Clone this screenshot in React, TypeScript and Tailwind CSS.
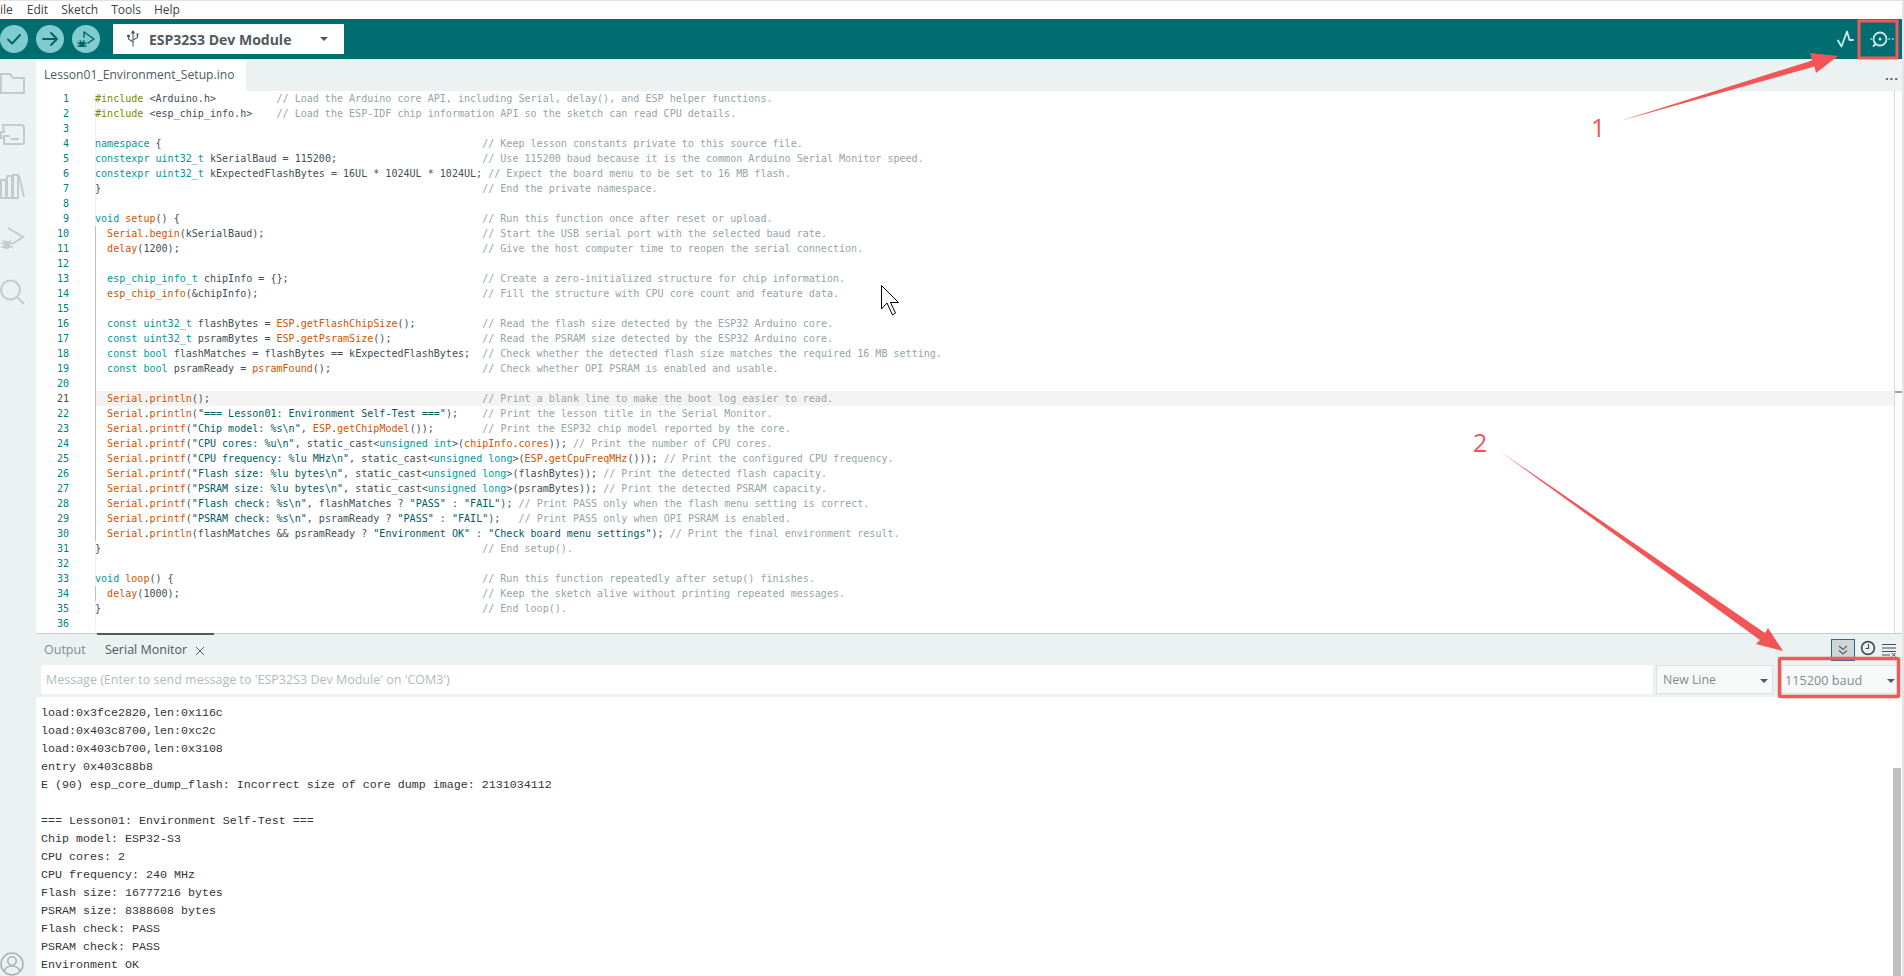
import React from "react";

const tok: Record<string, string> = {
  k: "text-[#00979d]",
  f: "text-[#d35400]",
  p: "text-[#728e00]",
  s: "text-[#005c5f]",
  c: "text-[#95a5a6]",
};

type L = [string, string?, number?];
const code: L[] = [
  ["[p:#include] <Arduino.h>", "// Load the Arduino core API, including Serial, delay(), and ESP helper functions.", 30],
  ["[p:#include] <esp_chip_info.h>", "// Load the ESP-IDF chip information API so the sketch can read CPU details.", 30],
  [""],
  ["[k:namespace] {", "// Keep lesson constants private to this source file."],
  ["[k:constexpr] [k:uint32_t] kSerialBaud = 115200;", "// Use 115200 baud because it is the common Arduino Serial Monitor speed."],
  ["[k:constexpr] [k:uint32_t] kExpectedFlashBytes = 16UL * 1024UL * 1024UL;", "// Expect the board menu to be set to 16 MB flash."],
  ["}", "// End the private namespace."],
  [""],
  ["[k:void] [f:setup]() {", "// Run this function once after reset or upload."],
  ["  [f:Serial].[f:begin](kSerialBaud);", "// Start the USB serial port with the selected baud rate."],
  ["  [f:delay](1200);", "// Give the host computer time to reopen the serial connection."],
  [""],
  ["  [k:esp_chip_info_t] chipInfo = {};", "// Create a zero-initialized structure for chip information."],
  ["  [f:esp_chip_info](&chipInfo);", "// Fill the structure with CPU core count and feature data."],
  [""],
  ["  [k:const] [k:uint32_t] flashBytes = [f:ESP].[f:getFlashChipSize]();", "// Read the flash size detected by the ESP32 Arduino core."],
  ["  [k:const] [k:uint32_t] psramBytes = [f:ESP].[f:getPsramSize]();", "// Read the PSRAM size detected by the ESP32 Arduino core."],
  ["  [k:const] [k:bool] flashMatches = flashBytes == kExpectedFlashBytes;", "// Check whether the detected flash size matches the required 16 MB setting."],
  ["  [k:const] [k:bool] psramReady = [f:psramFound]();", "// Check whether OPI PSRAM is enabled and usable."],
  [""],
  ["  [f:Serial].[f:println]();", "// Print a blank line to make the boot log easier to read."],
  ['  [f:Serial].[f:println]([s:"=== Lesson01: Environment Self-Test ==="]);', "// Print the lesson title in the Serial Monitor."],
  ['  [f:Serial].[f:printf]([s:"Chip model: %s\\n"], [f:ESP].[f:getChipModel]());', "// Print the ESP32 chip model reported by the core."],
  ['  [f:Serial].[f:printf]([s:"CPU cores: %u\\n"], static_cast<[k:unsigned] [k:int]>([f:chipInfo].[f:cores]));', "// Print the number of CPU cores.", 0],
  ['  [f:Serial].[f:printf]([s:"CPU frequency: %lu MHz\\n"], static_cast<[k:unsigned] [k:long]>([f:ESP].[f:getCpuFreqMHz]()));', "// Print the configured CPU frequency.", 0],
  ['  [f:Serial].[f:printf]([s:"Flash size: %lu bytes\\n"], static_cast<[k:unsigned] [k:long]>(flashBytes));', "// Print the detected flash capacity.", 0],
  ['  [f:Serial].[f:printf]([s:"PSRAM size: %lu bytes\\n"], static_cast<[k:unsigned] [k:long]>(psramBytes));', "// Print the detected PSRAM capacity.", 0],
  ['  [f:Serial].[f:printf]([s:"Flash check: %s\\n"], flashMatches ? [s:"PASS"] : [s:"FAIL"]);', "// Print PASS only when the flash menu setting is correct.", 0],
  ['  [f:Serial].[f:printf]([s:"PSRAM check: %s\\n"], psramReady ? [s:"PASS"] : [s:"FAIL"]);  ', "// Print PASS only when OPI PSRAM is enabled.", 0],
  ['  [f:Serial].[f:println](flashMatches && psramReady ? [s:"Environment OK"] : [s:"Check board menu settings"]);', "// Print the final environment result.", 0],
  ["}", "// End setup()."],
  [""],
  ["[k:void] [f:loop]() {", "// Run this function repeatedly after setup() finishes."],
  ["  [f:delay](1000);", "// Keep the sketch alive without printing repeated messages."],
  ["}", "// End loop()."],
  [""],
];

const out = [
  "load:0x3fce2820,len:0x116c",
  "load:0x403c8700,len:0xc2c",
  "load:0x403cb700,len:0x3108",
  "entry 0x403c88b8",
  "E (90) esp_core_dump_flash: Incorrect size of core dump image: 2131034112",
  "",
  "=== Lesson01: Environment Self-Test ===",
  "Chip model: ESP32-S3",
  "CPU cores: 2",
  "CPU frequency: 240 MHz",
  "Flash size: 16777216 bytes",
  "PSRAM size: 8388608 bytes",
  "Flash check: PASS",
  "PSRAM check: PASS",
  "Environment OK",
];

function renderCode(src: string) {
  const parts: React.ReactNode[] = [];
  const re = /\[([a-z]):([^\]]*)\]/g;
  let last = 0;
  let m: RegExpExecArray | null;
  let i = 0;
  while ((m = re.exec(src))) {
    if (m.index > last) parts.push(src.slice(last, m.index));
    parts.push(
      <span key={i++} className={tok[m[1]]}>
        {m[2]}
      </span>
    );
    last = m.index + m[0].length;
  }
  if (last < src.length) parts.push(src.slice(last));
  return parts;
}

function plainLen(src: string) {
  return src.replace(/\[([a-z]):([^\]]*)\]/g, "$2").length;
}

function CodeLine({ line, n }: { line: L; n: number }) {
  const [src, comment, col] = line;
  const len = plainLen(src);
  const target = col === undefined ? 64 : col;
  const pad = comment ? " ".repeat(Math.max(1, target - len)) : "";
  const active = n === 21;
  const guide = (n >= 10 && n <= 30) || n === 34;
  return (
    <div className="flex h-[15px] leading-[15px]">
      <div className={`w-[59px] shrink-0 pr-[26px] text-right ${active ? "text-[#434f54]" : "text-[#008184]"}`}>{n}</div>
      <div className={`flex-1 whitespace-pre border-l ${guide ? "border-[#b8c0c1]" : "border-[#f0f2f2]"} ${active ? "bg-[#f3f3f3]" : ""}`}>
        <span className="ml-[-1px]">
          {renderCode(src)}
          {pad}
          {comment && <span className={tok.c}>{comment}</span>}
        </span>
      </div>
    </div>
  );
}

function ToolBtn({ children }: { children: React.ReactNode }) {
  return (
    <div className="flex h-[28px] w-[28px] items-center justify-center rounded-full bg-[#7fcbcd]">
      <svg width="28" height="28" viewBox="0 0 28 28" fill="none" stroke="#006468" strokeWidth="2" strokeLinecap="round" strokeLinejoin="round">
        {children}
      </svg>
    </div>
  );
}

function Caret() {
  return <div className="h-0 w-0 border-x-[4px] border-t-[4.5px] border-x-transparent border-t-[#4e5b61]" />;
}

export default function App() {
  return (
    <div className="relative flex h-[976px] w-[1904px] flex-col overflow-hidden border-r-2 border-[#e4e4e4] bg-white font-['Open_Sans',sans-serif] text-[#4e5b61]">
      <div className="flex h-[19px] shrink-0 items-center gap-[13px] border-t border-[#e2e2e2] text-[12px] text-[#3a4347]">
        <span className="mr-[1px]">ile</span>
        <span>Edit</span>
        <span>Sketch</span>
        <span>Tools</span>
        <span>Help</span>
      </div>

      <div className="flex h-[40px] shrink-0 items-center bg-[#006d70] pr-[4px]">
        <div className="flex items-center gap-[8px]">
          <ToolBtn>
            <path d="M8 14.5l4.2 4L20 10" />
          </ToolBtn>
          <ToolBtn>
            <path d="M7 14h14M15 8l6 6-6 6" />
          </ToolBtn>
          <ToolBtn>
            <path d="M12 7l10 7-6 4M12 7v5" strokeWidth="1.5" />
            <circle cx="10" cy="19.5" r="2.6" fill="#006468" stroke="none" />
            <path d="M6 18h8M6 21h8M8 15.5l1 1.5M12 15.5l-1 1.5" strokeWidth="1.3" />
          </ToolBtn>
        </div>
        <div className="ml-[13px] flex h-[30px] w-[231px] items-center bg-white pl-[13px] pr-[16px]">
          <svg width="14" height="18" viewBox="0 0 14 18" fill="none" stroke="#4e5b61" strokeWidth="1.1" strokeLinecap="round">
            <path d="M7 2v14M7 12L2.5 9V6.5M7 10l4.5-2.5V5" />
            <path d="M7 1L5.7 3h2.6z" fill="#4e5b61" />
            <circle cx="2.5" cy="6" r="1" fill="#4e5b61" />
            <rect x="10.5" y="3.5" width="2" height="2" fill="#4e5b61" stroke="none" />
          </svg>
          <span className="ml-[9px] flex-1 text-[14px] font-bold text-[#4e5b61]">ESP32S3 Dev Module</span>
          <Caret />
        </div>
        <div className="ml-auto flex items-center gap-[7px]">
          <svg width="18" height="20" viewBox="0 0 18 20" fill="none" stroke="#cdeaea" strokeWidth="1.8" strokeLinejoin="round" strokeLinecap="round">
            <path d="M1 11.5l3.5 6L10 2.5l2.5 8.5H16" />
          </svg>
          <svg width="36" height="24" viewBox="0 0 36 24" fill="none" stroke="#cdeaea" strokeWidth="1.8" strokeLinecap="round">
            <circle cx="18" cy="12" r="6.5" />
            <circle cx="18" cy="12" r="1.5" fill="#cdeaea" stroke="none" />
            <path d="M13.5 17l-2 2" />
            <path d="M9 12h.6M27 12h.6M30.5 12h.6" strokeWidth="1.4" />
          </svg>
        </div>
      </div>

      <div className="flex min-h-0 flex-1">
        <div className="flex w-[36px] shrink-0 flex-col bg-[#ecf1f1] pt-[13px]">
          <svg className="shrink-0" width="36" height="234" viewBox="0 0 36 234" fill="none" stroke="#c3cccd" strokeWidth="2">
            <path d="M1 2h9l3 4h11v15H1z" />
            <path d="M3 53h18q3 0 3 3v14q0 2-2 2H4v-6H1v-6h3z" />
            <path d="M3 64h7M11 67h8" />
            <path d="M1 108v18h5v-18zM7 104v22h5v-22zM13 103v23h5v-23zM19 104l5 21" />
            <path d="M8 156l15 9-11 7" />
            <ellipse cx="7" cy="173" rx="3.5" ry="4" fill="#c3cccd" stroke="none" />
            <path d="M1 171h12M1 175h12M3 168l2 2M11 168l-2 2" strokeWidth="1.5" />
            <circle cx="10.5" cy="218" r="9.5" />
            <path d="M17 225l7 7" />
          </svg>
          <svg className="mt-auto shrink-0" width="36" height="24" viewBox="0 0 36 24" fill="none" stroke="#a9b3b5" strokeWidth="1.6">
            <circle cx="12" cy="12" r="11" />
            <circle cx="12" cy="9" r="4.2" />
            <path d="M4 20c1-4 4-6 8-6s7 2 8 6" />
          </svg>
        </div>

        <div className="flex min-w-0 flex-1 flex-col">
          <div className="flex h-[32px] shrink-0 items-stretch bg-[#ecf1f1]">
            <div className="flex w-[210px] items-center bg-white pl-[8px] text-[12.15px]">Lesson01_Environment_Setup.ino</div>
            <div className="ml-auto flex items-center pr-[3px] text-[13px] font-bold leading-none tracking-[1px]">...</div>
          </div>

          <div className="flex h-[542px] shrink-0">
            <div className="min-w-0 flex-1 overflow-hidden font-['DejaVu_Sans_Mono',monospace] text-[10.05px] text-[#434f54]">
              {code.map((l, i) => (
                <CodeLine key={i} line={l} n={i + 1} />
              ))}
            </div>
            <div className="relative w-[8px] shrink-0 border-l border-[#d5d9da]">
              <div className="absolute left-0 top-[300px] h-[2px] w-[8px] bg-[#9aa3a5]" />
            </div>
          </div>

          <div className="flex h-[32px] shrink-0 items-center border-t border-[#c8cfcf] bg-[#ecf1f1] text-[12.5px]">
            <span className="ml-[8px] w-[53px] pt-[2px] text-[#7f8c8d]">Output</span>
            <div className="relative flex h-[31px] w-[117px] items-center gap-[8px] pl-[8px] pt-[2px]">
              <div className="absolute left-0 top-[-1px] h-[2px] w-full bg-[#4e5b61]" />
              <span>Serial Monitor</span>
              <svg width="10" height="10" viewBox="0 0 10 10" stroke="#4e5b61" strokeWidth="1">
                <path d="M1 1l8 8M9 1l-8 8" />
              </svg>
            </div>
            <div className="ml-auto flex items-center pr-[5px]">
              <div className="flex h-[22px] w-[24px] items-center justify-center border border-[#1a6f9c] bg-[#d0d5d6]">
                <svg width="12" height="12" viewBox="0 0 12 12" fill="none" stroke="#5b6669" strokeWidth="1.3">
                  <path d="M2 2l4 3.5L10 2M2 6.5L6 10l4-3.5" />
                </svg>
              </div>
              <svg className="mb-[4px] ml-[5px]" width="16" height="16" viewBox="0 0 16 16" fill="none" stroke="#434f54" strokeWidth="1.7">
                <circle cx="8" cy="8" r="6.4" />
                <path d="M8.5 4v4.5H5.5" strokeWidth="1.2" />
              </svg>
              <svg className="ml-[6px]" width="15" height="14" viewBox="0 0 15 14" fill="none" stroke="#434f54" strokeWidth="1">
                <path d="M0 1.5h14M0 5h14M0 8.5h14M0 12h8" />
                <path d="M10 10l3.5 3.5M13.5 10L10 13.5" />
              </svg>
            </div>
          </div>

          <div className="flex h-[32px] shrink-0 bg-[#ecf1f1] pb-[3px] pl-[5px] text-[12.3px]">
            <div className="flex w-[1612px] items-center rounded-[2px] bg-white pl-[5px] pt-[2px] text-[12.5px] text-[#b0bcbd]">Message (Enter to send message to 'ESP32S3 Dev Module' on 'COM3')</div>
            <div className="ml-[3px] flex w-[117px] items-center justify-between border border-[#dae3e3] bg-[#f7f9f9] pl-[6px] pr-[4px] pt-[2px] text-[#7f8c8d]">
              New Line
              <Caret />
            </div>
            <div className="ml-[8px] flex w-[119px] items-center justify-between border border-[#dae3e3] bg-[#f7f9f9] pl-[3px] pr-[4px] pt-[2px] text-[12.7px] text-[#7f8c8d]">
              115200 baud
              <Caret />
            </div>
          </div>

          <div className="relative min-h-0 flex-1 overflow-hidden pl-[5px] pt-[7px] font-['Liberation_Mono',monospace] text-[11.67px] leading-[18px] text-[#333]">
            {out.map((l, i) => (
              <div key={i} className="h-[18px] whitespace-pre">
                {l}
              </div>
            ))}
            <div className="absolute bottom-0 right-[1px] top-[71px] w-[8px] bg-[#c1c1c1]" />
          </div>
        </div>
      </div>

      <svg className="pointer-events-none absolute left-0 top-0" width="1904" height="976" viewBox="0 0 1904 976" fill="none">
        <rect x="1859" y="21" width="38" height="37" stroke="#ee5a5a" strokeWidth="3" />
        <rect x="1779.5" y="658.5" width="119" height="38" rx="1" stroke="#ee5a5a" strokeWidth="3.5" />
        <polygon points="1620,121 1812,60.5 1810,53 1838,56 1816,73 1814.5,66.5" fill="#f25555" />
        <polygon points="1499.5,451 1765,633 1768,628 1783,651 1756,644 1760,640" fill="#f25555" />
        <polygon points="881.5,285.5 898.5,302.5 890.5,302.5 895.5,313 892.5,315 887,303 881.5,309" fill="#fff" stroke="#000" strokeWidth="1" />
      </svg>
      <span className="absolute left-[1591px] top-[110px] text-[25px] leading-[34px] text-[#f05555]">1</span>
      <span className="absolute left-[1473px] top-[425px] text-[25px] leading-[34px] text-[#f05555]">2</span>
    </div>
  );
}
